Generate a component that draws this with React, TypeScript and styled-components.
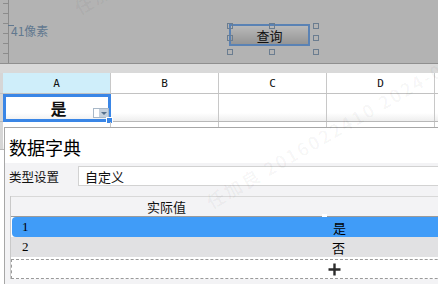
import styled, { createGlobalStyle } from "styled-components";

const GlobalStyle = createGlobalStyle`
  html, body {
    margin: 0;
    padding: 0;
  }
  body {
    width: 438px;
    height: 284px;
    overflow: hidden;
    background: #fff;
    font-family: "Noto Sans CJK SC", "Noto Sans", sans-serif;
  }
`

const Page = styled.div`
  position: relative;
  width: 438px;
  height: 284px;
  overflow: hidden;
  display: flex;
  flex-direction: column;
`

// form designer canvas
const Canvas = styled.div`
  position: relative;
  flex: none;
  height: 63px;
  display: flex;
  background: #b3b3b3;
  border-bottom: 1px solid #8f8f8f;
`

const Ruler = styled.div`
  width: 8px;
  border-right: 1px solid #8c8c8c;
  background: repeating-linear-gradient(to bottom, transparent 0 3px, #8c8c8c 3px 4px, transparent 4px 10px) right top / 5px 100% no-repeat;
`

const SizeLabel = styled.div`
  position: absolute;
  left: 11px;
  top: 23px;
  font-size: 12px;
  line-height: 16px;
  color: #61788f;

  &::before {
    content: "";
    position: absolute;
    left: -3px;
    top: 2px;
    width: 6px;
    height: 1px;
    background: #61788f;
  }
`

const Widget = styled.div`
  position: absolute;
  left: 229px;
  top: 24px;
  width: 81px;
  height: 22px;
  box-sizing: border-box;
  border: 2px solid #5a82b4;
  background: linear-gradient(#b9b9b9, #959595);
  display: flex;
  align-items: center;
  justify-content: center;
  font-size: 13px;
  color: #111;
`

const Handle = styled.span<{ $x: number; $y: number }>`
  position: absolute;
  left: ${p => p.$x}px;
  top: ${p => p.$y}px;
  width: 4px;
  height: 4px;
  border: 1px solid #6b7d90;
`

const Strip = styled.div`
  flex: none;
  height: 9px;
  background: #d9d9d9;
`

// spreadsheet
const SheetRow = styled.div<{ $head?: boolean }>`
  flex: none;
  display: flex;
  height: ${p => (p.$head ? 20 : 27)}px;
  border-bottom: 1px solid ${p => (p.$head ? "#c2c2c2" : "#b8b8b8")};
  background: ${p => (p.$head ? "#fff" : "linear-gradient(#fff 70%, #eeeeee)")};
`

const Corner = styled.div`
  flex: none;
  width: 3px;
  background: #d6d6d6;
`

const ColHead = styled.div<{ $active?: boolean }>`
  position: relative;
  width: 108px;
  flex: none;
  box-sizing: border-box;
  border-right: 1px solid #c8c8c8;
  background: ${p => (p.$active ? "#cfeefa" : "transparent")};
  display: flex;
  align-items: center;
  justify-content: center;
  font-family: "DejaVu Sans Mono", monospace;
  font-size: 11px;
  color: #111;
`

const Cell = styled(ColHead)`
  font-family: "Noto Sans CJK SC", sans-serif;
  font-size: 16px;
  font-weight: bold;
`

const Selection = styled.div`
  position: absolute;
  left: 0;
  top: 0;
  right: -1px;
  bottom: -1px;
  border: 3px solid #3a86e6;
  display: flex;
  align-items: center;
  justify-content: center;
  padding-left: 3px;
`

const DropButton = styled.div`
  position: absolute;
  right: -1px;
  bottom: 1px;
  width: 16px;
  height: 10px;
  box-sizing: border-box;
  border: 1px solid #a8b8c8;
  background: #fff;
  display: flex;
  justify-content: flex-end;
`

const DropArrow = styled.div`
  width: 9px;
  background: #c5d0dc;
  display: flex;
  align-items: center;
  justify-content: center;

  &::after {
    content: "";
    border-left: 3px solid transparent;
    border-right: 3px solid transparent;
    border-top: 3px solid #56708c;
  }
`

const FillHandle = styled.span`
  position: absolute;
  right: -5px;
  bottom: -5px;
  width: 5px;
  height: 5px;
  background: #3a86e6;
  border: 1px solid #fff;
`

// dialog
const Dialog = styled.div`
  position: absolute;
  left: 4px;
  top: 127px;
  width: 700px;
  height: 200px;
  background: #f3f3f5;
  border: 1px solid #a7a7a7;
  display: flex;
  flex-direction: column;
`

const DialogTitle = styled.div`
  height: 35px;
  background: #fff;
  padding: 2px 0 0 4px;
  box-sizing: border-box;
  display: flex;
  align-items: center;
  font-size: 18px;
  color: #000;
`

const FormRow = styled.div`
  display: flex;
  align-items: center;
  padding: 3px 0 10px 4px;
`

const FieldLabel = styled.div`
  width: 69px;
  font-size: 12.5px;
  color: #111;
`

const TextInput = styled.div`
  flex: 1;
  height: 20px;
  box-sizing: border-box;
  border: 1px solid #d2d2d2;
  background: #fff;
  padding-left: 6px;
  display: flex;
  align-items: center;
  font-size: 13px;
  color: #111;
`

const Table = styled.div`
  margin-left: 5px;
  width: 646px;
  background: #fff;
  border-left: 1px solid #c9c9c9;
  display: flex;
  flex-direction: column;
`

const TableHead = styled.div`
  display: grid;
  grid-template-columns: 311px 5px 1fr;
  height: 20px;
  background: #f3f3f5;
  border-top: 1px solid #d8d8d8;
  box-shadow: inset 0 -1px 0 #9b9b9b;
`

const HeadCell = styled.div`
  display: flex;
  align-items: center;
  justify-content: center;
  font-size: 13px;
  color: #111;
  padding-bottom: 2px;
`

const Resizer = styled.div`
  background: linear-gradient(to bottom, transparent 17px, #fff 17px);
`

const BodyRow = styled.div<{ $selected?: boolean }>`
  display: grid;
  grid-template-columns: 311px 5px 1fr;
  height: 20px;
  margin-left: ${p => (p.$selected ? 1 : 0)}px;
  border-radius: ${p => (p.$selected ? "4px 0 0 4px" : "0")};
  background: ${p => (p.$selected ? "#409cf8" : "#e1e1e3")};
  font-size: 13px;
  color: #000;
`

const IndexCell = styled.div<{ $selected?: boolean }>`
  display: flex;
  align-items: center;
  padding-left: ${p => (p.$selected ? 10 : 11)}px;
  font-family: "Liberation Serif", serif;
  font-size: 13px;
`

const ValueCell = styled.div`
  grid-column: 3;
  display: flex;
  align-items: center;
  padding-left: 5px;
`

const AddRow = styled.div`
  margin-top: 2px;
  height: 20px;
  box-sizing: border-box;
  border: 1px dashed #9a9a9a;
  display: flex;
  align-items: center;
  justify-content: center;
`

const Watermark = styled.div<{ $x: number; $y: number }>`
  position: absolute;
  left: ${p => p.$x}px;
  top: ${p => p.$y}px;
  transform: rotate(-30deg);
  transform-origin: left bottom;
  white-space: nowrap;
  font-size: 18px;
  font-weight: bold;
  letter-spacing: 2px;
  color: rgba(0, 0, 0, 0.035);
  pointer-events: none;
`

const handles = [
    [-4, -3], [38, -3], [82, -3],
    [-4, 9], [82, 9],
    [-4, 23], [38, 23], [82, 23],
]

const columns = ["A", "B", "C", "D", "E"]

const App = (): JSX.Element => {
    return (
        <>
            <GlobalStyle />
            <Page>
                <Canvas>
                    <Ruler />
                    <SizeLabel>41像素</SizeLabel>
                    <Widget>
                        查询
                        {handles.map(([x, y]) => (
                            <Handle key={`${x}-${y}`} $x={x} $y={y} />
                        ))}
                    </Widget>
                </Canvas>
                <Strip />
                <SheetRow $head>
                    <Corner />
                    {columns.map(c => (
                        <ColHead key={c} $active={c === "A"}>{c}</ColHead>
                    ))}
                </SheetRow>
                <SheetRow>
                    <Corner />
                    <Cell>
                        <Selection>
                            是
                            <DropButton>
                                <DropArrow />
                            </DropButton>
                            <FillHandle />
                        </Selection>
                    </Cell>
                    {columns.slice(1).map(c => <Cell key={c} />)}
                </SheetRow>
                <SheetRow>
                    <Corner />
                    {columns.map(c => <Cell key={c} />)}
                </SheetRow>

                <Dialog>
                    <DialogTitle>数据字典</DialogTitle>
                    <FormRow>
                        <FieldLabel>类型设置</FieldLabel>
                        <TextInput>自定义</TextInput>
                    </FormRow>
                    <Table>
                        <TableHead>
                            <HeadCell>实际值</HeadCell>
                            <Resizer />
                            <HeadCell />
                        </TableHead>
                        <BodyRow $selected>
                            <IndexCell $selected>1</IndexCell>
                            <ValueCell>是</ValueCell>
                        </BodyRow>
                        <BodyRow>
                            <IndexCell>2</IndexCell>
                            <ValueCell>否</ValueCell>
                        </BodyRow>
                        <AddRow>
                            <svg width="13" height="13" viewBox="0 0 13 13">
                                <path d="M6.5 0.5v12M0.5 6.5h12" stroke="#2b2b2b" strokeWidth="2.4" />
                            </svg>
                        </AddRow>
                    </Table>
                </Dialog>

                <Watermark $x={214} $y={188}>任加良 2016022410 2024-05</Watermark>
                <Watermark $x={82} $y={-6}>任加良 2016022410</Watermark>
            </Page>
        </>
    )
}

export default App;
